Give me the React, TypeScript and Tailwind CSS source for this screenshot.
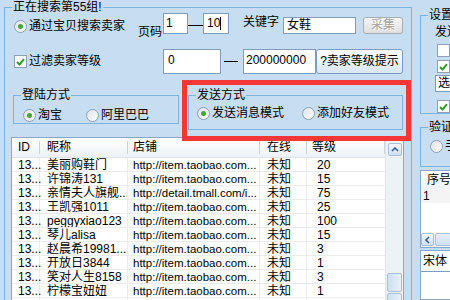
import React from 'react';

const rows = [
  ['美丽购鞋门', 'http://item.taobao.com...', '20'],
  ['许锦涛131', 'http://item.taobao.com...', '15'],
  ['亲情夫人旗舰...', 'http://detail.tmall.com/i...', '75'],
  ['王凯强1011', 'http://item.taobao.com...', '25'],
  ['peggyxiao123', 'http://item.taobao.com...', '100'],
  ['琴儿alisa', 'http://item.taobao.com...', '15'],
  ['赵晨希19981...', 'http://item.taobao.com...', '3'],
  ['开放日3844', 'http://item.taobao.com...', '1'],
  ['笑对人生8158', 'http://item.taobao.com...', '3'],
  ['柠檬宝妞妞', 'http://item.taobao.com...', '1'],
];

function Radio({ checked }: { checked?: boolean }) {
  return (
    <span className="w-[13px] h-[13px] shrink-0 rounded-full border border-[#8d9fb5] bg-linear-to-br from-[#dde2e8] to-white flex items-center justify-center">
      {checked && <span className="w-[5px] h-[5px] rounded-full bg-[#42a636]" />}
    </span>
  );
}

function Check({ checked }: { checked?: boolean }) {
  return (
    <span className="w-[13px] h-[13px] shrink-0 border border-[#8d9fb5] bg-white flex items-center justify-center">
      {checked && (
        <svg width="9" height="8" viewBox="0 0 9 8">
          <path d="M1 4 L3.5 6.5 L8 1.2" stroke="#2e9e2a" strokeWidth="2" fill="none" />
        </svg>
      )}
    </span>
  );
}

function Group({ title, className, children }: { title: string; className: string; children?: React.ReactNode }) {
  return (
    <div className={`relative border border-[#7db3dc] ${className}`}>
      <span className="absolute left-[7px] top-[-8px] px-[1px] bg-[#c7ddf2] leading-[14px] whitespace-nowrap">{title}</span>
      {children}
    </div>
  );
}

export default function App() {
  return (
    <div className="flex w-[450px] h-[300px] overflow-hidden bg-[#c7ddf2] text-[12px] text-black font-['Liberation_Sans','Noto_Sans_CJK_SC',sans-serif]">
      {/* main search group */}
      <div className="w-[412px] shrink-0 pl-[4px] pt-[7px]">
        <Group title="正在搜索第55组!" className="w-[408px] h-[310px]">
          {/* row 1 */}
          <div className="flex items-start h-[26px]">
            <div className="ml-[9px] mt-[12px] w-[124px] h-[13px] flex items-center gap-[2px]">
              <Radio checked />
              <span className="leading-[13px] whitespace-nowrap">通过宝贝搜索卖家</span>
            </div>
            <span className="mt-[18px] w-[25px] leading-[13px]">页码</span>
            <div className="mt-[5px] w-[25px] h-[21px] border border-[#7f9db9] bg-white pl-[2px] leading-[19px]">1</div>
            <div className="mt-[17px] w-[15px] h-px bg-black" />
            <div className="mt-[5px] w-[26px] h-[21px] border border-[#7f9db9] bg-white pl-[3px] leading-[19px] flex">
              10<span className="w-px h-[13px] mt-[3px] bg-black" />
            </div>
            <span className="ml-[14px] mt-[8px] w-[36px] leading-[13px] whitespace-nowrap">关键字</span>
            <div className="ml-[4px] mt-[9px] w-[73px] h-[17px] border border-[#7f9db9] bg-white pl-[3px] leading-[15px]">女鞋</div>
            <div className="ml-[7px] mt-[9px] w-[40px] h-[17px] rounded-[3px] border border-[#a9aeb3] bg-linear-to-b from-[#f7f7f7] to-[#dedede] text-[#a3a3a3] text-center leading-[15px] [text-shadow:1px_1px_0_#fff]">
              采集
            </div>
          </div>

          {/* row 2 */}
          <div className="flex items-start h-[39px]">
            <div className="ml-[9px] mt-[21px] w-[149px] h-[13px] flex items-center gap-[2px]">
              <Check checked />
              <span className="leading-[13px] whitespace-nowrap">过滤卖家等级</span>
            </div>
            <div className="mt-[15px] w-[58px] h-[25px] border border-[#7f9db9] bg-white pl-[4px] pt-[3px] leading-[14px]">0</div>
            <div className="ml-[3px] mt-[27px] w-[14px] h-px bg-black" />
            <div className="ml-[5px] mt-[15px] w-[73px] h-[25px] border border-[#7f9db9] bg-white pl-[2px] pt-[3px] leading-[14px]">200000000</div>
            <div className="mt-[15px] w-[87px] h-[25px] rounded-[3px] border border-[#7a9cc0] bg-linear-to-b from-white to-[#d9e6f3] text-center leading-[23px] whitespace-nowrap">
              ?卖家等级提示
            </div>
          </div>

          {/* row 3 */}
          <div className="flex items-start h-[64px]">
            <Group title="登陆方式" className="ml-[8px] mt-[22px] w-[166px] h-[29px]">
              <div className="pl-[9px] pt-[13px] flex items-center h-[13px] box-content">
                <div className="w-[63px] flex items-center gap-[2px]">
                  <Radio checked />
                  <span className="leading-[13px]">淘宝</span>
                </div>
                <div className="flex items-center gap-[2px]">
                  <Radio />
                  <span className="leading-[13px]">阿里巴巴</span>
                </div>
              </div>
            </Group>
            <Group title="发送方式" className="ml-[9px] mt-[22px] w-[215px] h-[35px]">
              <div className="pl-[8px] pt-[11px] flex items-center h-[13px] box-content">
                <div className="w-[105px] flex items-center gap-[2px]">
                  <Radio checked />
                  <span className="leading-[13px] whitespace-nowrap">发送消息模式</span>
                </div>
                <div className="flex items-center gap-[2px]">
                  <Radio />
                  <span className="leading-[13px] whitespace-nowrap">添加好友模式</span>
                </div>
              </div>
              <div className="absolute left-[-7px] top-[-16px] w-[229px] h-[61px] border-[5px] border-[#f53636] pointer-events-none z-10" />
            </Group>
          </div>

          {/* list */}
          <div className="ml-[6px] w-[393px] h-[200px] border border-[#89a9cb] bg-white flex">
            <div className="w-[373px] shrink-0">
              <div className="flex h-[20px] bg-linear-to-b from-white to-[#eef2f6] border-b border-[#dfe4ea]">
                {[
                  ['ID', 'w-[28px] pl-[6px]'],
                  ['昵称', 'w-[88px] pl-[7px]'],
                  ['店铺', 'w-[132px] pl-[5px]'],
                  ['在线', 'w-[47px] pl-[7px]'],
                  ['等级', 'w-[78px] pl-[5px]'],
                ].map(([t, c]) => (
                  <div key={t} className={`${c} relative leading-[19px] whitespace-nowrap`}>
                    {t}
                    <span className="absolute right-0 top-[3px] h-[13px] w-px bg-[#c9d2dc]" />
                  </div>
                ))}
              </div>
              {rows.map(([name, url, lv], i) => (
                <div key={i} className="flex h-[14px] leading-[15px] border-b border-[#ececec]">
                  <div className="w-[28px] pl-[6px] border-r border-[#ececec]">13...</div>
                  <div className="w-[88px] pl-[7px] border-r border-[#ececec] overflow-hidden whitespace-nowrap">{name}</div>
                  <div className="w-[132px] pl-[5px] border-r border-[#ececec] overflow-hidden whitespace-nowrap text-[11.5px]">{url}</div>
                  <div className="w-[47px] pl-[7px] border-r border-[#ececec]">未知</div>
                  <div className="w-[78px] pl-[10px]">{lv}</div>
                </div>
              ))}
              <div className="flex h-[14px]">
                <div className="w-[28px] border-r border-[#ececec]" />
                <div className="w-[88px] border-r border-[#ececec]" />
                <div className="w-[132px] border-r border-[#ececec]" />
                <div className="w-[47px] border-r border-[#ececec]" />
              </div>
            </div>
            {/* vertical scrollbar */}
            <div className="w-[18px] shrink-0 bg-[#edf2f7] border-l border-[#dde4ec] flex flex-col items-center">
              <div className="mt-[5px] w-[14px] h-[13px] rounded-[2px] border border-[#a8c0da] bg-linear-to-b from-[#f4f8fc] to-[#cfdff0] flex items-center justify-center">
                <svg width="8" height="5" viewBox="0 0 8 5">
                  <path d="M1 4 L4 1 L7 4" stroke="#3b5f8a" strokeWidth="1.6" fill="none" />
                </svg>
              </div>
              <div className="mt-[117px] w-[15px] h-[19px] rounded-[2px] border border-[#a8c0da] bg-linear-to-r from-[#cfe0f2] to-[#e6eff8]" />
              <div className="mt-[1px] w-[15px] h-[10px] rounded-[2px] border border-[#a8c0da] bg-linear-to-r from-[#cfe0f2] to-[#e6eff8]" />
            </div>
          </div>
        </Group>
      </div>

      {/* right panel */}
      <div className="flex-1 overflow-hidden flex flex-col">
        <Group title="设置" className="ml-[8px] mt-[15px] w-[60px] h-[99px] shrink-0">
          <div className="pl-[14px] pt-[9px] leading-[14px] whitespace-nowrap">发送</div>
          <div className="pl-[16px] mt-[5px]"><Check /></div>
          <div className="pl-[16px] mt-[3px]"><Check checked /></div>
          <div className="ml-[14px] mt-[2px] h-[17px] border border-[#7f9db9] bg-white pl-[2px] leading-[15px]">选</div>
          <div className="pl-[16px] mt-[8px]"><Check checked /></div>
        </Group>
        <Group title="验证" className="ml-[8px] mt-[13px] w-[60px] h-[40px] shrink-0">
          <div className="pl-[9px] pt-[12px] flex items-center gap-[2px]">
            <Radio />
            <span className="leading-[13px]">手</span>
          </div>
        </Group>
        <div className="ml-[8px] mt-[3px] w-[60px] h-[78px] shrink-0 border border-[#89a9cb] bg-white flex flex-col">
          <div className="h-[18px] pl-[6px] leading-[18px] bg-linear-to-b from-white to-[#eef2f6] whitespace-nowrap">序号</div>
          <div className="pl-[2px] leading-[14px] bg-[#f4f4f4]">1</div>
          <div className="flex-1" />
          <div className="h-[14px] bg-[#edf2f7] flex">
            <div className="w-[13px] h-[13px] rounded-[2px] border border-[#a8c0da] bg-linear-to-b from-[#f4f8fc] to-[#cfdff0] flex items-center justify-center">
              <svg width="5" height="8" viewBox="0 0 5 8">
                <path d="M4 1 L1 4 L4 7" stroke="#3b5f8a" strokeWidth="1.6" fill="none" />
              </svg>
            </div>
            <div className="flex-1 ml-[1px] h-[13px] rounded-[2px] border border-[#a8c0da] bg-linear-to-b from-[#e6eff8] to-[#cfe0f2]" />
          </div>
        </div>
        <div className="ml-[8px] mt-[2px] w-[60px] flex-1 border border-[#89a9cb] bg-white">
          <div className="h-[21px] pl-[2px] leading-[21px] border-b border-[#7f9db9]">宋体</div>
        </div>
      </div>
    </div>
  );
}
